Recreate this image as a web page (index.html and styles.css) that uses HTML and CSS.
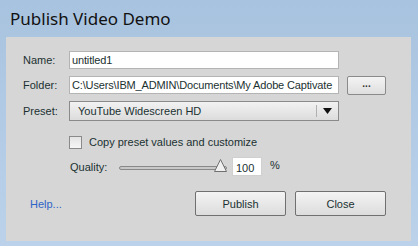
FILE: index.html
```html
<!DOCTYPE html>
<html lang="en">
<head>
    <meta charset="UTF-8">
    <title>Publish Video Demo</title>
    <link rel="stylesheet" href="styles.css">
</head>
<body>
    <div class="window">
        <div class="title-bar">Publish Video Demo</div>
        <div class="panel">
            <div class="form">
                <label class="label">Name:</label>
                <div class="field"><input class="text-input" type="text" value="untitled1"></div>

                <label class="label">Folder:</label>
                <div class="field">
                    <input class="text-input" type="text" value="C:\Users\IBM_ADMIN\Documents\My Adobe Captivate">
                    <button class="browse-button">...</button>
                </div>

                <label class="label">Preset:</label>
                <div class="field">
                    <div class="select">
                        <span class="select-value">YouTube Widescreen HD</span>
                        <span class="select-arrow">
                            <svg width="9" height="6" viewBox="0 0 9 6"><polygon points="0,0 9,0 4.5,6" fill="#111"/></svg>
                        </span>
                    </div>
                </div>
            </div>

            <div class="options">
                <div class="check-row">
                    <span class="checkbox"></span>
                    <span>Copy preset values and customize</span>
                </div>
                <div class="quality-row">
                    <span class="quality-label">Quality:</span>
                    <div class="slider">
                        <div class="slider-track"></div>
                        <svg class="slider-thumb" width="13" height="13" viewBox="0 0 13 13">
                            <polygon points="6.5,0.5 12.5,12.5 0.5,12.5" fill="#f0f0f0" stroke="#707070"/>
                        </svg>
                    </div>
                    <input class="quality-input" type="text" value="100">
                    <span class="percent">%</span>
                </div>
            </div>

            <div class="footer">
                <a class="help-link" href="#">Help...</a>
                <div class="buttons">
                    <button class="button">Publish</button>
                    <button class="button">Close</button>
                </div>
            </div>
        </div>
    </div>
</body>
</html>
```

FILE: styles.css
```css
body, html {
    margin: 0;
    padding: 0;
    width: 100%;
    height: 100%;
}

.window {
    width: 418px;
    height: 246px;
    background: linear-gradient(to bottom, #a8c3df, #bcd2eb);
    display: flex;
    flex-direction: column;
    box-sizing: border-box;
    padding: 0 7px 5px 6px;
}

.title-bar {
    height: 37px;
    box-sizing: border-box;
    padding: 7px 0 0 4px;
    font-family: "Noto Sans", sans-serif;
    font-size: 17px;
    color: #111;
}

.panel {
    flex: 1;
    background-color: #d6d6d6;
    box-sizing: border-box;
    padding: 14px 0 0 17px;
    font-family: "Liberation Sans", Arial, sans-serif;
    font-size: 11px;
    color: #1b3131;
}

.form {
    display: grid;
    grid-template-columns: 46px auto;
    row-gap: 6px;
    align-items: center;
}

.label {
    line-height: 18px;
}

.field {
    display: flex;
    align-items: center;
}

.text-input {
    width: 270px;
    height: 18px;
    box-sizing: border-box;
    margin: 0;
    padding: 0 2px;
    border: 1px solid #b4b4b4;
    background: #fff;
    font-family: "Liberation Sans", Arial, sans-serif;
    font-size: 11px;
    letter-spacing: -0.15px;
    color: #1b3131;
    outline: none;
}

.browse-button {
    width: 39px;
    height: 19px;
    margin: 1px 0 0 8px;
    padding: 0 0 4px;
    border: 1px solid #8a8a8a;
    border-radius: 2px;
    background: linear-gradient(to bottom, #f4f4f4, #dedede);
    font-family: "Liberation Sans", Arial, sans-serif;
    font-size: 10px;
    font-weight: bold;
    color: #333;
    line-height: 1;
}

.select {
    width: 270px;
    height: 20px;
    box-sizing: border-box;
    display: flex;
    align-items: center;
    border: 1px solid #8a8a8a;
    background: linear-gradient(to bottom, #f2f2f2, #dcdcdc);
}

.select-value {
    flex: 1;
    padding-left: 8px;
}

.select-arrow {
    width: 21px;
    height: 12px;
    border-left: 1px solid #b0b0b0;
    display: flex;
    align-items: center;
    justify-content: center;
}

.options {
    padding-left: 46px;
    margin-top: 14px;
}

.check-row {
    display: flex;
    align-items: center;
    gap: 7px;
    height: 14px;
}

.checkbox {
    width: 11px;
    height: 11px;
    border: 1px solid #8a8a8a;
    background: linear-gradient(to bottom, #e4e4e4, #f6f6f6);
}

.quality-row {
    display: flex;
    align-items: center;
    margin-top: 8px;
    height: 19px;
}

.quality-label {
    width: 49px;
    padding-left: 1px;
}

.slider {
    position: relative;
    width: 108px;
    height: 19px;
}

.slider-track {
    position: absolute;
    left: 0;
    right: 0;
    top: 9px;
    height: 2px;
    border: 1px solid #888;
    border-radius: 2px;
    background: #c8c8c8;
}

.slider-thumb {
    position: absolute;
    left: 95px;
    top: 2px;
}

.quality-input {
    width: 30px;
    height: 19px;
    box-sizing: border-box;
    margin: 0 0 0 5px;
    padding: 2px 0 0 3px;
    border: 1px solid #d0d0d0;
    background: #fff;
    font-family: "Liberation Sans", Arial, sans-serif;
    font-size: 11px;
    color: #1b3131;
    outline: none;
}

.percent {
    margin-left: 8px;
    margin-top: -3px;
}

.footer {
    display: flex;
    align-items: center;
    justify-content: space-between;
    margin-top: 15px;
    padding-right: 25px;
}

.help-link {
    margin-left: 7px;
    color: #2d64c8;
    text-decoration: none;
}

.buttons {
    display: flex;
    gap: 9px;
}

.button {
    width: 91px;
    height: 25px;
    border: 1px solid #707070;
    border-radius: 2px;
    background: linear-gradient(to bottom, #f4f4f4, #dcdcdc);
    font-family: "Liberation Sans", Arial, sans-serif;
    font-size: 11px;
    color: #1b3131;
}
```
